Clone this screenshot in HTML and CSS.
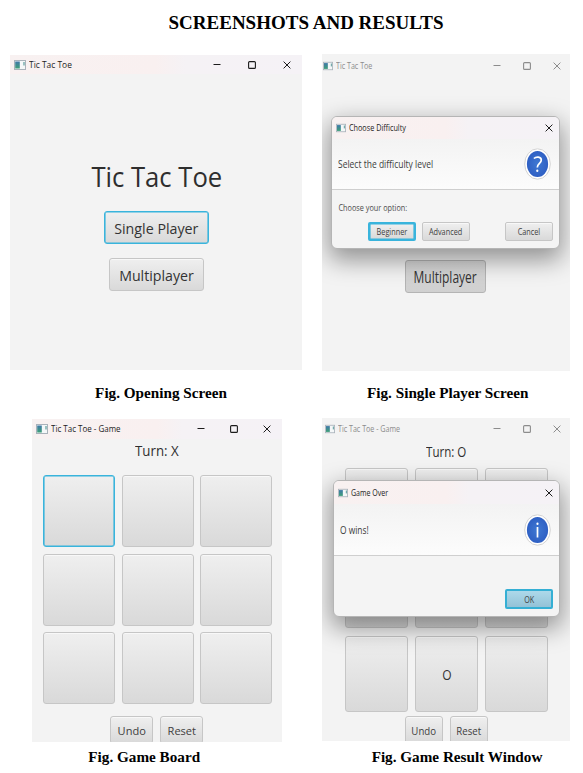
FILE: index.html
```html
<!DOCTYPE html>
<html lang="en">
<head>
<meta charset="utf-8">
<title>Screenshots and Results</title>
<link rel="stylesheet" href="styles.css">
</head>
<body>
<svg class="defs" width="0" height="0" aria-hidden="true">
  <defs>
    <linearGradient id="teal" x1="0" y1="0" x2="0" y2="1"><stop offset="0" stop-color="#3f78a8"/><stop offset="1" stop-color="#3f9f78"/></linearGradient>
    <radialGradient id="blue"><stop offset="0" stop-color="#3f78d2"/><stop offset="1" stop-color="#2f60c4"/></radialGradient>
    <symbol id="app" viewBox="0 0 12 10"><rect x=".5" y=".5" width="11" height="9" fill="#f4f7f8" stroke="#a9b2ba"/><rect x="1.2" y="1.5" width="4.6" height="7" fill="url(#teal)"/><path d="M10 2v3.5" stroke="#5b9c9c" stroke-width="1.2"/></symbol>
    <symbol id="min" viewBox="0 0 8 8"><path d="M.5 3.5h7" stroke="currentColor" fill="none"/></symbol>
    <symbol id="max" viewBox="0 0 8 8"><rect x=".6" y=".6" width="6.8" height="6.8" rx="1" stroke="currentColor" stroke-width="1.1" fill="none"/></symbol>
    <symbol id="close" viewBox="0 0 8 8"><path d="M.6.6l6.8 6.8M7.4.6L.6 7.4" stroke="currentColor" fill="none"/></symbol>
  </defs>
</svg>
<h1>SCREENSHOTS AND RESULTS</h1>

<div class="row row-top">
  <figure class="fig-opening">
    <div class="window">
      <div class="titlebar"><svg class="app"><use href="#app"/></svg><span class="fit name">Tic Tac Toe</span><div class="controls"><svg><use href="#min"/></svg><svg><use href="#max"/></svg><svg><use href="#close"/></svg></div></div>
      <div class="menu">
        <div class="headline"><span class="fit">Tic Tac Toe</span></div>
        <div class="btn big focus single"><span class="fit">Single Player</span></div>
        <div class="btn big multi"><span class="fit">Multiplayer</span></div>
      </div>
    </div>
    <figcaption>Fig. Opening Screen</figcaption>
  </figure>

  <figure class="fig-single">
    <div class="window inactive">
      <div class="titlebar"><svg class="app"><use href="#app"/></svg><span class="fit name">Tic Tac Toe</span><div class="controls"><svg><use href="#min"/></svg><svg><use href="#max"/></svg><svg><use href="#close"/></svg></div></div>
      <div class="menu"><div class="btn big multi"><span class="fit">Multiplayer</span></div></div>
      <div class="dialog">
        <div class="titlebar"><svg class="app"><use href="#app"/></svg><span class="fit name">Choose Difficulty</span><div class="controls"><svg><use href="#close"/></svg></div></div>
        <div class="header"><span class="fit message">Select the difficulty level</span>
          <svg class="badge" viewBox="0 0 27 32"><ellipse cx="13.5" cy="16" rx="12.8" ry="15.2" fill="#fff" stroke="#d3d3d3"/><ellipse cx="13.5" cy="16" rx="10.6" ry="13.1" fill="url(#blue)"/><path d="M9.9 10.5C12 8.5 17.3 8.3 17.3 12.1C17.3 15.3 13.3 15.5 13.3 19.4" fill="none" stroke="#fff" stroke-width="1.7"/><ellipse cx="13.3" cy="22.7" rx="1.1" ry="1.2" fill="#fff"/></svg>
        </div>
        <div class="body">
          <span class="fit prompt">Choose your option:</span>
          <div class="actions"><div class="btn small focus"><span class="fit">Beginner</span></div><div class="btn small"><span class="fit">Advanced</span></div><div class="btn small cancel"><span class="fit">Cancel</span></div></div>
        </div>
      </div>
    </div>
    <figcaption>Fig. Single Player Screen</figcaption>
  </figure>
</div>

<div class="row row-bottom">
  <figure class="fig-board">
    <div class="window">
      <div class="titlebar"><svg class="app"><use href="#app"/></svg><span class="fit name">Tic Tac Toe - Game</span><div class="controls"><svg><use href="#min"/></svg><svg><use href="#max"/></svg><svg><use href="#close"/></svg></div></div>
      <div class="turn"><span class="fit">Turn: X</span></div>
      <div class="board">
        <div class="btn focus"></div><div class="btn"></div><div class="btn"></div>
        <div class="btn"></div><div class="btn"></div><div class="btn"></div>
        <div class="btn"></div><div class="btn"></div><div class="btn"></div>
      </div>
      <div class="tools"><div class="btn undo"><span class="fit">Undo</span></div><div class="btn reset"><span class="fit">Reset</span></div></div>
    </div>
    <figcaption>Fig. Game Board</figcaption>
  </figure>

  <figure class="fig-result">
    <div class="window inactive">
      <div class="titlebar"><svg class="app"><use href="#app"/></svg><span class="fit name">Tic Tac Toe - Game</span><div class="controls"><svg><use href="#min"/></svg><svg><use href="#max"/></svg><svg><use href="#close"/></svg></div></div>
      <div class="turn"><span class="fit">Turn: O</span></div>
      <div class="board">
        <div class="btn"></div><div class="btn"></div><div class="btn"></div>
        <div class="btn"></div><div class="btn"></div><div class="btn"></div>
        <div class="btn"></div><div class="btn"><span class="fit">O</span></div><div class="btn"></div>
      </div>
      <div class="tools"><div class="btn undo"><span class="fit">Undo</span></div><div class="btn reset"><span class="fit">Reset</span></div></div>
      <div class="dialog">
        <div class="titlebar"><svg class="app"><use href="#app"/></svg><span class="fit name">Game Over</span><div class="controls"><svg><use href="#close"/></svg></div></div>
        <div class="header"><span class="fit message">O wins!</span>
          <svg class="badge" viewBox="0 0 27 32"><ellipse cx="13.5" cy="16" rx="12.8" ry="15.2" fill="#fff" stroke="#d3d3d3"/><ellipse cx="13.5" cy="16" rx="10.6" ry="13.1" fill="url(#blue)"/><path d="M13.5 13v10.4" stroke="#fff" stroke-width="1.7"/><ellipse cx="13.5" cy="9.8" rx="1.1" ry="1.2" fill="#fff"/></svg>
        </div>
        <div class="body"><div class="btn small default"><span class="fit">OK</span></div></div>
      </div>
    </div>
    <figcaption>Fig. Game Result Window</figcaption>
  </figure>
</div>
</body>
</html>
```
FILE: styles.css
```css
* { box-sizing: border-box; }
body { margin: 0; width: 583px; height: 773px; overflow: hidden; background: #fff; color: #000; font-family: "Liberation Serif", serif; }
.defs { display: block; }
h1 { margin: 0; height: 54px; padding: 11px 0 0 29px; font-size: 19px; line-height: 24px; text-align: center; white-space: nowrap; }
.row { display: flex; align-items: flex-start; }
.row-top { height: 364px; padding-left: 10px; gap: 19.5px; }
.row-bottom { padding-left: 31.5px; gap: 40px; }
figure { margin: 0; }
figcaption { font-size: 15.2px; font-weight: bold; line-height: 18px; text-align: center; white-space: nowrap; }

.window { position: relative; display: flow-root; overflow: hidden; background: #f3f3f3; color: #2e2e2e; font-family: "Open Sans", "Noto Sans", sans-serif; }
.fit { display: inline-block; white-space: nowrap; transform: scaleX(var(--fit, 1)); }
.titlebar { display: flex; align-items: center; height: 19px; background: linear-gradient(90deg, #f8f1f1, #f9f0f0 50%, #f5f2f5 60%, #f5f2f6); font-size: 9.5px; color: #1c1c1c; }
.titlebar .fit { transform-origin: left center; line-height: 14px; }
.titlebar svg { flex: none; width: 8px; height: 8px; }
.titlebar .app { width: 12px; height: 10px; margin-right: 3px; }
.controls { display: flex; flex: none; margin-left: auto; gap: 27px; }
.name { width: 0; }
.inactive > .titlebar { background: #f3f3f3; color: #8c8c8c; }

.btn { display: flex; align-items: center; justify-content: center; border: 1px solid #c6c6c6; border-radius: 3px; background: linear-gradient(#efefef, #d9d9d9); box-shadow: inset 0 1px #f8f8f8; color: #333; }
.btn.focus { border: 1px solid #39b4dc; box-shadow: inset 0 0 0 .6px #39b4dc; }
.big { height: 33px; font-size: 15px; }
.small { width: 48px; height: 20px; border-radius: 2px; font-size: 9px; color: #404040; }
.small.focus { border-width: 2px; }
.menu { display: flex; flex-direction: column; align-items: center; }

.fig-opening { width: 292px; }
.fig-opening .window { height: 315px; margin-top: 1px; }
.fig-opening .titlebar { padding: 0 11px 0 4px; --fit: .885; }
.headline { height: 44px; margin-top: 81px; font-size: 27px; line-height: 44px; --fit: .95; }
.headline .fit { padding-left: 2px; }
.fig-opening .single { width: 105px; margin-top: 12px; --fit: .95; }
.fig-opening .multi { width: 95px; margin-top: 14px; --fit: .945; }
.single .fit, .fig-opening .multi .fit { padding-left: 1px; }
.fig-opening figcaption { padding: 14px 0 0 10px; }

.fig-single { width: 248.5px; }
.fig-single .window { height: 317px; }
.inactive > .titlebar { height: 23px; padding: 0 9px 0 1.5px; --fit: .75; }
.inactive > .titlebar .app { width: 10px; margin-right: 3px; }
.inactive > .titlebar .controls { gap: 22px; }
.fig-single .multi { width: 81px; margin: 183px 1px 0 0; font-size: 16px; background: linear-gradient(#d8d8d8, #d0d0d0); border-color: #b4b4b4; box-shadow: none; --fit: .75; }
.fig-single figcaption { padding: 13px 0 0 4px; }

.dialog { position: absolute; border: 1px solid #b5b5b5; border-radius: 6px; background: #f4f4f4; box-shadow: 0 9px 24px 2px rgba(0, 0, 0, .4); overflow: hidden; }
.dialog .titlebar { height: 22px; padding: 0 6px 0 4px; --fit: .763; }
.dialog .titlebar .app { width: 10px; margin-right: 3px; }
.header { display: flex; align-items: center; justify-content: space-between; border-bottom: 1px solid #cfcfcf; background: linear-gradient(#f3f3f3, #fcfcfc); padding: 0 8px 0 6px; font-size: 10.5px; color: #3c3c3c; }
.message { width: 0; transform-origin: left center; }
.badge { width: 27px; height: 32px; }
.fig-single .dialog { left: 9px; top: 62px; width: 229px; height: 133px; --fit: .81; }
.fig-single .header { height: 51px; }
.prompt { display: block; padding: 11px 0 0 8px; font-size: 9px; line-height: 14px; color: #4c4c4c; transform-origin: left center; }
.actions { display: flex; gap: 6px; padding: 7px 6px 0 36px; }
.actions .small { height: 19px; }
.cancel { margin-left: auto; }

.fig-board { width: 250.5px; }
.fig-board .window { height: 323px; margin-top: 1px; }
.fig-board .titlebar { height: 20px; padding: 0 11px 0 4px; --fit: .84; }
.fig-board .controls { gap: 25px; }
.turn { height: 36px; padding-top: 1px; font-size: 14.5px; line-height: 22px; text-align: center; --fit: .915; }
.fig-board .board { display: grid; grid-template-columns: repeat(3, 72px); grid-auto-rows: 72px; gap: 6.6px; padding-left: 11.5px; }
.tools { display: flex; justify-content: center; gap: 7px; font-size: 11.5px; }
.tools .btn { width: 43px; height: 28px; color: #404040; }
.fig-board .tools { margin-top: 12px; --fit: .96; }
.fig-board figcaption { padding: 6px 25px 0 0; }

.fig-result { width: 248px; }
.fig-result .window { height: 323px; }
.fig-result .inactive > .titlebar { height: 22px; padding: 0 9px 0 3px; }
.fig-result .turn { height: 28px; padding-top: 0; font-size: 15px; --fit: .77; }
.fig-result .board { display: grid; grid-template-columns: repeat(3, 63px); grid-auto-rows: 76px; gap: 8px 7px; padding-left: 23px; font-size: 15px; --fit: .8; }
.fig-result .tools { margin-top: 4px; --fit: .84; }
.fig-result .tools .btn { width: 38px; }
.fig-result .dialog { left: 11px; top: 62px; width: 227px; height: 137px; --fit: .8; }
.fig-result .dialog .titlebar { height: 23px; --fit: .74; }
.fig-result .header { height: 52px; }
.fig-result .body { display: flex; justify-content: flex-end; padding: 33px 6px 0; }
.default { border: 2px solid #35afd4; background: linear-gradient(#add9ea, #93c2d7); box-shadow: none; }
.fig-result figcaption { padding: 7px 0 0 22px; }
```
